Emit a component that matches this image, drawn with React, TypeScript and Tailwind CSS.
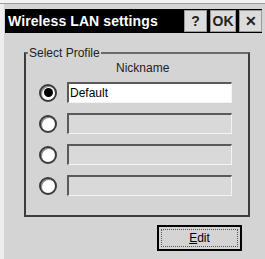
const sans = "font-['Liberation_Sans',Arial,sans-serif]"

function Radio({ checked }: { checked?: boolean }) {
  return (
    <div className="w-[18px] h-[18px] rounded-full bg-white border-2 border-[#3a3a3a] shadow-[inset_1px_1px_0_#8a8a8a] flex items-center justify-center shrink-0">
      {checked && <div className="w-[9px] h-[9px] rounded-full bg-black" />}
    </div>
  )
}

function Field({ value, enabled }: { value?: string; enabled?: boolean }) {
  return (
    <div
      className={`w-[165px] h-[21px] border-t-2 border-l-2 border-b border-r border-t-[#5a5a5a] border-l-[#5a5a5a] border-b-[#f4f4f4] border-r-[#f4f4f4] flex items-center pl-[1px] text-[12px] text-black ${
        enabled ? 'bg-white' : 'bg-[#d9d9d9]'
      }`}
    >
      {value}
    </div>
  )
}

function TitleButton({ label, w }: { label: string; w: string }) {
  return (
    <div
      className={`${w} h-[22px] bg-[#dcdcdc] border border-[#9a9a9a] flex items-center justify-center text-[14px] font-bold text-[#222] leading-none`}
    >
      {label}
    </div>
  )
}

export default function App() {
  return (
    <div className={`w-[265px] h-[259px] bg-[#d4d4d4] flex flex-col overflow-hidden ${sans}`}>
      <div className="h-[3px] bg-[#f2f2f2] shrink-0" />
      <div className="h-[1px] bg-[#9c9c9c] shrink-0" />
      <div className="flex flex-1">
        <div className="w-[4px] bg-[#ededed] shrink-0" />
        <div className="flex-1 flex flex-col">
          {/* Title bar */}
          <div className="mt-[5px] ml-[1px] w-[257px] h-[24px] bg-black flex items-center justify-between">
            <span className="pl-[3px] text-white font-bold text-[14px] tracking-[0.1px]">
              Wireless LAN settings
            </span>
            <div className="flex gap-[3px]">
              <TitleButton label="?" w="w-[23px]" />
              <TitleButton label="OK" w="w-[26px]" />
              <TitleButton label="✕" w="w-[23px]" />
            </div>
          </div>

          {/* Select Profile group */}
          <fieldset className="mt-[13px] ml-[20px] w-[226px] h-[171px] border-2 border-[#3c3c3c] border-t-[#6a6a6a] pt-0">
            <legend className="ml-[2px] px-[1px] text-[12px] leading-[14px] text-[#222]">Select Profile</legend>
            <div className="mt-[1px] ml-[90px] text-[12px] leading-[14px] text-[#222]">Nickname</div>
            <div className="mt-[7px] flex flex-col gap-[10px]">
              {[0, 1, 2, 3].map((i) => (
                <div key={i} className="flex items-center ml-[13px] gap-[10px]">
                  <Radio checked={i === 0} />
                  <Field value={i === 0 ? 'Default' : ''} enabled={i === 0} />
                </div>
              ))}
            </div>
          </fieldset>

          {/* Edit button */}
          <div className="mt-[8px] ml-[153px] w-[85px] h-[26px] border-2 border-black bg-[#d4d4d4] p-[2px]">
            <div className="w-full h-full border border-dotted border-[#555] flex items-center justify-center text-[12px] text-black">
              <span>
                <span className="underline">E</span>dit
              </span>
            </div>
          </div>
        </div>
      </div>
    </div>
  )
}
